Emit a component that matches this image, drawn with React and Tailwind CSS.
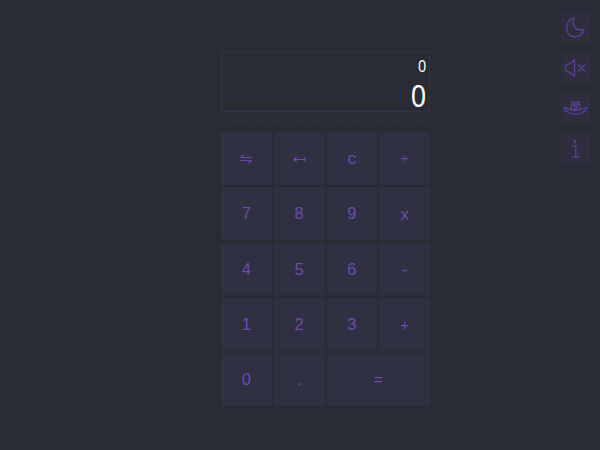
const keys = ['⇋', '↤', 'c', '÷', '7', '8', '9', 'x', '4', '5', '6', '-', '1', '2', '3', '+', '0', '.', '='];

const labelStyles = {
  c: 'inline-block scale-x-110 pt-[2px] text-[16px]',
  '÷': 'pt-[1px] text-[15px]',
  x: 'pt-[1px] text-[17px]',
  '+': 'text-[15px]',
  '=': 'text-[16px]',
};

function SwapIcon() {
  return (
    <svg className="mt-[2px]" width="12" height="10" viewBox="0 0 12 10" fill="none" stroke="currentColor" strokeWidth="1.1" aria-label="swap">
      <path d="M3.5 0.7 L0.8 3.5 H11.5 M0.3 6.5 H11.2 L8.5 9.3" />
    </svg>
  );
}

function BackIcon() {
  return (
    <svg className="mt-[2px]" width="13" height="7" viewBox="0 0 13 7" fill="none" stroke="currentColor" strokeWidth="1.1" aria-label="backspace">
      <path d="M1 3.5 H12 M3.8 0.8 L1 3.5 L3.8 6.2 M12 1 V6" />
    </svg>
  );
}

function Key({ label }) {
  return (
    <button
      type="button"
      className={`flex items-center justify-center rounded-[1px] bg-[#2f3042] leading-none text-[#6c4bb0] ${label === '=' ? 'col-span-2' : ''}`}
    >
      {label === '⇋' ? <SwapIcon /> : label === '↤' ? <BackIcon /> : <span className={labelStyles[label] || 'text-[16.5px]'}>{label}</span>}
    </button>
  );
}

function Tool({ label, children }) {
  return (
    <button type="button" aria-label={label} className="h-[30px] w-[29px] rounded-[1px] bg-[#2e2e3f] text-[#5d4198]">
      <svg width="29" height="30" viewBox="0 0 29 30" fill="none" stroke="currentColor" strokeWidth="1.3" strokeLinejoin="round">
        {children}
      </svg>
    </button>
  );
}

export default function App() {
  return (
    <main className="flex h-[450px] w-[600px] justify-between overflow-hidden bg-[#2a2c35] [font-family:'Liberation_Sans',Arial,sans-serif]">
      <section className="ml-[221px] flex w-[209px] flex-col pt-[51px]">
        <div className="flex h-[61px] flex-col items-end border border-[#34324e] pr-[3px] text-white [font-family:'Noto_Sans','Open_Sans',sans-serif]">
          <div className="mt-[3px] h-[22px] text-[16px] leading-[22px]"><span className="inline-block origin-right scale-x-90">0</span></div>
          <div className="h-[34px] text-[30px] leading-[38px]"><span className="inline-block origin-right scale-x-90">0</span></div>
        </div>
        <div className="mt-[9px] border-t border-dashed border-[#343348]" />
        <div className="mt-[10px] grid h-[274px] grid-cols-4 grid-rows-5 gap-x-[2px] gap-y-[2.5px]">
          {keys.map((k) => <Key key={k} label={k} />)}
        </div>
      </section>
      <nav className="mr-[10px] flex flex-col gap-[10.7px] pt-3">
        <Tool label="Dark mode">
          <path d="M13 6 C3 9 3.5 22.5 12 24.5 C17.5 26 22 22 23 17.5 C16 19.5 10 14.5 13 6 Z" />
        </Tool>
        <Tool label="Muted">
          <path d="M13.5 7 V23 L8.5 19 H6.5 L4.5 17 V13 L6.5 11 H8.5 Z M17 11.5 L24 18.5 M24 11.5 L17 18.5" />
        </Tool>
        <Tool label="Theme">
          <path d="M10 17 L11 9 Q12.5 8 14.5 9.2 Q16.5 8 18 9 L19 17 M10.7 11.2 H18.3 M10 17 H19 M10 16.5 C6 15.8 5 13.8 3.5 14.5 C1.5 15.5 7.5 21.3 14.5 21.3 C21.5 21.3 27.5 15.5 25.5 14.5 C24 13.8 23 15.8 19 16.5" />
          <circle cx="14.5" cy="14.2" r="1.5" />
        </Tool>
        <Tool label="Information">
          <path d="M11.5 12 H14.8 V23 M11 23 H18.5" />
          <circle cx="14" cy="7.5" r=".8" fill="currentColor" />
        </Tool>
      </nav>
    </main>
  );
}
